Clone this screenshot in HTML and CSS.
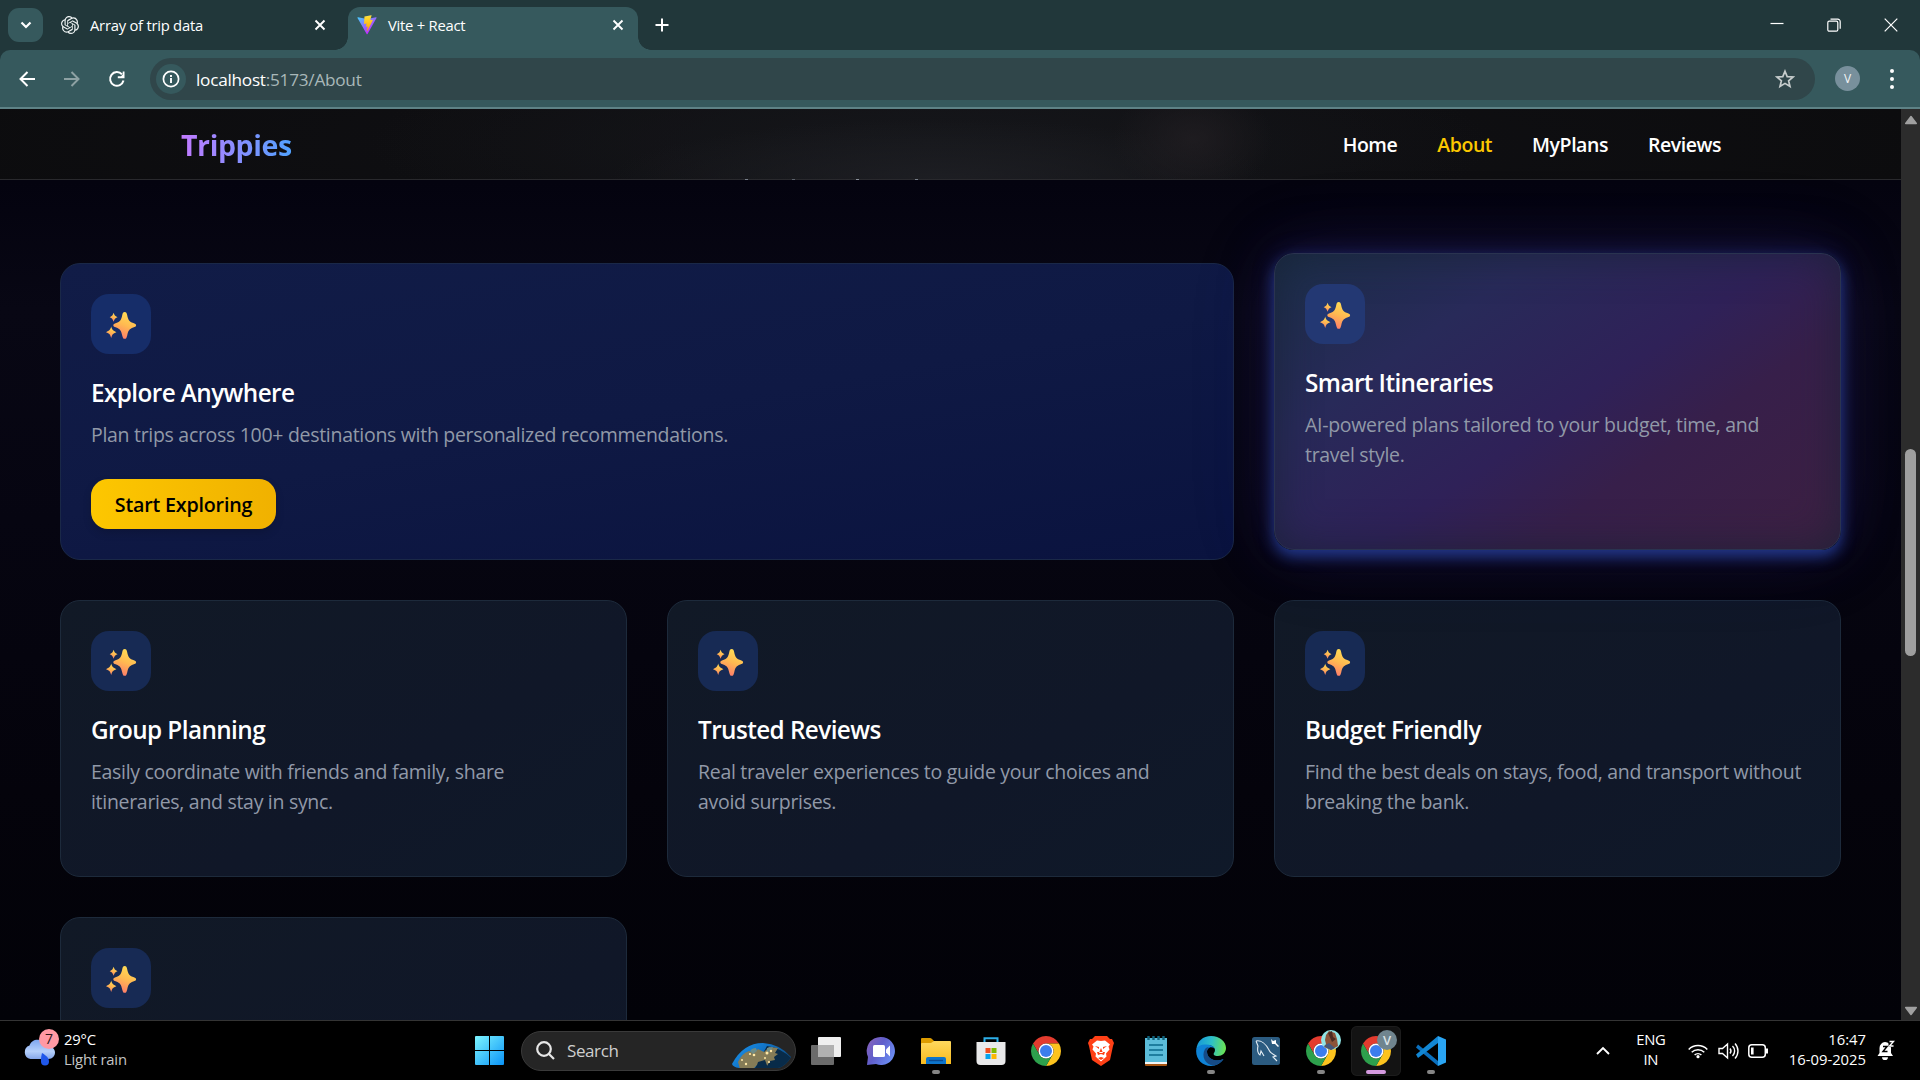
FILE: index.html
```html
<!DOCTYPE html>
<html lang="en">
<head>
<meta charset="utf-8">
<title>Vite + React</title>
<link rel="stylesheet" href="styles.css">
</head>
<body>
<svg class="defs" width="0" height="0" aria-hidden="true">
  <defs>
    <linearGradient id="gold" x1="0.7" y1="0" x2="0.35" y2="1"><stop offset="0" stop-color="#ffdf55"/><stop offset=".5" stop-color="#ffb951"/><stop offset="1" stop-color="#fd7a6c"/></linearGradient>
    <symbol id="sparkle" viewBox="0 0 60 60">
      <g fill="url(#gold)">
        <path d="M33.700 18c1.600 0 2 1.200 2.500 3.200 1 4.800 2.200 6.400 6 7.800 1.800.7 2.900 1.100 2.900 2.300s-1.100 1.700-2.900 2.300c-3.800 1.400-5 3-6 7.800-.5 2-.9 3.400-2.500 3.400s-2-1.400-2.500-3.400c-1-4.800-2.200-6.400-6-7.800-1.800-.6-2.900-1.100-2.900-2.300s1.100-1.600 2.900-2.300c3.800-1.400 5-3 6-7.800.5-2 .9-3.200 2.500-3.200z"/>
        <path d="M22.600 18.800c.8 2.600 1.300 3.200 3.900 4.400-2.600 1.200-3.100 1.900-3.900 4.600-.8-2.700-1.300-3.400-3.900-4.600 2.600-1.200 3.100-1.800 3.900-4.400z"/>
        <path d="M20.200 32.600c.9 3.300 1.700 4.200 5.200 5.600-3.500 1.300-4.300 2.300-5.200 5.900-.9-3.600-1.700-4.600-5.200-5.900 3.500-1.400 4.300-2.300 5.200-5.600z"/>
      </g>
    </symbol>
    <symbol id="chrome" viewBox="2 2 44 44">
      <path fill="#e33b2e" d="M4.950 13A22 22 0 0 1 43.050 13L24 13A11 11 0 0 0 14.470 29.500Z"/>
      <path fill="#fcc31e" d="M43.050 13A22 22 0 0 1 24 46L33.530 29.500A11 11 0 0 0 24 13Z"/>
      <path fill="#2da04c" d="M24 46A22 22 0 0 1 4.950 13L14.470 29.500A11 11 0 0 0 33.530 29.500Z"/>
      <circle cx="24" cy="24" r="11" fill="#fff"/><circle cx="24" cy="24" r="8.800" fill="#3b7ded"/>
    </symbol>
    <symbol id="x" viewBox="0 0 12 12"><path d="M1.500 1.500l9 9M10.500 1.500l-9 9" stroke="currentColor" stroke-width="1.900"/></symbol>
  </defs>
</svg>

<div class="screen">
  <div class="tabstrip">
    <button class="tab-search"><svg width="12" height="8" viewBox="0 0 12 8"><path d="M1.500 1.500L6 6l4.500-4.500" fill="none" stroke="#fff" stroke-width="2.200"/></svg></button>
    <div class="tab">
      <svg width="18" height="18" viewBox="0 0 24 24"><path fill="#eef3f3" d="M22.2819 9.8211a5.9847 5.9847 0 0 0-.5157-4.9108 6.0462 6.0462 0 0 0-6.5098-2.9A6.0651 6.0651 0 0 0 4.9807 4.1818a5.9847 5.9847 0 0 0-3.9977 2.9 6.0462 6.0462 0 0 0 .7427 7.0966 5.98 5.98 0 0 0 .511 4.9107 6.051 6.051 0 0 0 6.5146 2.9001A5.9847 5.9847 0 0 0 13.2599 24a6.0557 6.0557 0 0 0 5.7718-4.2058 5.9894 5.9894 0 0 0 3.9977-2.9001 6.0557 6.0557 0 0 0-.7475-7.0729zm-9.022 12.6081a4.4755 4.4755 0 0 1-2.8764-1.0408l.1419-.0804 4.7783-2.7582a.7948.7948 0 0 0 .3927-.6813v-6.7369l2.02 1.1686a.071.071 0 0 1 .038.052v5.5826a4.504 4.504 0 0 1-4.4945 4.4944zm-9.6607-4.1254a4.4708 4.4708 0 0 1-.5346-3.0137l.142.0852 4.783 2.7582a.7712.7712 0 0 0 .7806 0l5.8428-3.3685v2.3324a.0804.0804 0 0 1-.0332.0615L9.74 19.9502a4.4992 4.4992 0 0 1-6.1408-1.6464zM2.3408 7.8956a4.485 4.485 0 0 1 2.3655-1.9728V11.6a.7664.7664 0 0 0 .3879.6765l5.8144 3.3543-2.0201 1.1685a.0757.0757 0 0 1-.071 0l-4.8303-2.7865A4.504 4.504 0 0 1 2.3408 7.872zm16.5963 3.8558L13.1038 8.364 15.1192 7.2a.0757.0757 0 0 1 .071 0l4.8303 2.7913a4.4944 4.4944 0 0 1-.6765 8.1042v-5.6772a.79.79 0 0 0-.407-.667zm2.0107-3.0231l-.142-.0852-4.7735-2.7818a.7759.7759 0 0 0-.7854 0L9.409 9.2297V6.8974a.0662.0662 0 0 1 .0284-.0615l4.8303-2.7866a4.4992 4.4992 0 0 1 6.6802 4.66zM8.3065 12.863l-2.02-1.1638a.0804.0804 0 0 1-.038-.0567V6.0742a4.4992 4.4992 0 0 1 7.3757-3.4537l-.142.0805L8.704 5.459a.7948.7948 0 0 0-.3927.6813zm1.0976-2.3654l2.602-1.4998 2.6069 1.4998v2.9994l-2.5974 1.4997-2.6067-1.4997Z"/></svg>
      <span class="tab-title">Array of trip data</span>
      <svg class="close" width="12" height="12"><use href="#x"/></svg>
    </div>
    <div class="tab tab-active">
      <svg width="20" height="20" viewBox="0 0 410 404">
        <defs>
          <linearGradient id="va" x1="6" y1="33" x2="235" y2="344" gradientUnits="userSpaceOnUse"><stop stop-color="#41d1ff"/><stop offset="1" stop-color="#bd34fe"/></linearGradient>
          <linearGradient id="vb" x1="194" y1="8.800" x2="236" y2="293" gradientUnits="userSpaceOnUse"><stop stop-color="#ffea83"/><stop offset=".083" stop-color="#ffdd35"/><stop offset="1" stop-color="#ffa800"/></linearGradient>
        </defs>
        <path fill="url(#va)" d="M399.641 59.5246L215.643 388.545C211.844 395.338 202.084 395.378 198.228 388.618L10.5817 59.5563C6.38087 52.1896 12.6802 43.2665 21.0281 44.7586L205.223 77.6824C206.398 77.8924 207.601 77.8904 208.776 77.6763L389.119 44.8058C397.439 43.2894 403.768 52.1434 399.641 59.5246Z"/>
        <path fill="url(#vb)" d="M292.965 1.5744L156.801 28.2552C154.563 28.6937 152.906 30.5903 152.771 32.8664L144.395 174.33C144.198 177.662 147.258 180.248 150.51 179.498L188.42 170.749C191.967 169.931 195.172 173.055 194.443 176.622L183.18 231.775C182.422 235.487 185.907 238.661 189.532 237.56L212.947 230.446C216.577 229.344 220.065 232.527 219.297 236.242L201.398 322.875C200.278 328.294 207.486 331.249 210.492 326.603L212.5 323.5L323.454 102.072C325.312 98.3645 322.108 94.137 318.036 94.9228L279.014 102.454C275.347 103.161 272.227 99.746 273.262 96.1583L298.731 7.86689C299.767 4.27314 296.636 0.855181 292.965 1.5744Z"/>
      </svg>
      <span class="tab-title">Vite + React</span>
      <svg class="close" width="12" height="12"><use href="#x"/></svg>
    </div>
    <svg class="new-tab" width="14" height="14" viewBox="0 0 14 14"><path d="M7 .5v13M.5 7h13" stroke="#fff" stroke-width="2"/></svg>
    <div class="window-buttons">
      <svg width="14" height="14" viewBox="0 0 14 14"><path d="M.5 5.500h13" stroke="#fff" stroke-width="1.200"/></svg>
      <svg width="14" height="14" viewBox="0 0 14 14" fill="none" stroke="#fff" stroke-width="1.200"><rect x=".8" y="3.200" width="10" height="10" rx="1.500"/><path d="M3.500 1.200h7.200a2.500 2.500 0 0 1 2.500 2.500v7"/></svg>
      <svg width="14" height="14" viewBox="0 0 14 14"><path d="M.7.700l12.600 12.600M13.300.700L.7 13.300" stroke="#fff" stroke-width="1.200"/></svg>
    </div>
  </div>

  <div class="toolbar">
    <svg width="18" height="18" viewBox="0 0 18 18" fill="none" stroke="#fff" stroke-width="2"><path d="M17 9H3M9.500 2L2.500 9l7 7"/></svg>
    <svg width="18" height="18" viewBox="0 0 18 18" fill="none" stroke="#8da1a3" stroke-width="2"><path d="M1 9h14M8.500 2l7 7-7 7"/></svg>
    <svg width="18" height="18" viewBox="0 0 18 18" fill="none"><path d="M15.500 10.500A6.800 6.800 0 1 1 14 4.400" stroke="#fff" stroke-width="2"/><path d="M16.500 1.500v6.700H9.800V6.300h3.200l1.700-1.900V1.500z" fill="#fff"/></svg>
    <div class="omnibox">
      <span class="site-info"><svg width="18" height="18" viewBox="0 0 18 18" fill="none"><circle cx="9" cy="9" r="7.600" stroke="#fff" stroke-width="1.700"/><path d="M9 8v5M9 5v1.900" stroke="#fff" stroke-width="1.900"/></svg></span>
      <span class="url">localhost<i>:5173/About</i></span>
      <svg class="star" width="20" height="20" viewBox="0 0 20 20"><path d="M10 2.200l2.200 5.400 5.900.4-4.500 3.800 1.400 5.700-5-3.100-5 3.100 1.400-5.700L1.900 8l5.900-.4z" fill="none" stroke="#c6cccc" stroke-width="1.700"/></svg>
    </div>
    <span class="profile">V</span>
    <svg width="6" height="24" viewBox="0 0 6 24" fill="#fff"><circle cx="3" cy="4" r="2"/><circle cx="3" cy="12" r="2"/><circle cx="3" cy="20" r="2"/></svg>
  </div>

  <div class="viewport">
    <div class="page">
      <header class="site-header">
        <span class="logo">Trippies</span>
        <nav class="nav"><a>Home</a><a class="current">About</a><a>MyPlans</a><a>Reviews</a></nav>
      </header>
      <main class="cards">
        <article class="card card-wide">
          <span class="card-icon"><svg width="60" height="60"><use href="#sparkle"/></svg></span>
          <h3>Explore Anywhere</h3>
          <p>Plan trips across 100+ destinations with personalized recommendations.</p>
          <button class="cta">Start Exploring</button>
        </article>
        <article class="card card-hover">
          <span class="card-icon"><svg width="60" height="60"><use href="#sparkle"/></svg></span>
          <h3>Smart Itineraries</h3>
          <p>AI-powered plans tailored to your budget, time, and<br>travel style.</p>
        </article>
        <article class="card">
          <span class="card-icon"><svg width="60" height="60"><use href="#sparkle"/></svg></span>
          <h3>Group Planning</h3>
          <p>Easily coordinate with friends and family, share<br>itineraries, and stay in sync.</p>
        </article>
        <article class="card">
          <span class="card-icon"><svg width="60" height="60"><use href="#sparkle"/></svg></span>
          <h3>Trusted Reviews</h3>
          <p>Real traveler experiences to guide your choices and<br>avoid surprises.</p>
        </article>
        <article class="card">
          <span class="card-icon"><svg width="60" height="60"><use href="#sparkle"/></svg></span>
          <h3>Budget Friendly</h3>
          <p>Find the best deals on stays, food, and transport without<br>breaking the bank.</p>
        </article>
        <article class="card">
          <span class="card-icon"><svg width="60" height="60"><use href="#sparkle"/></svg></span>
        </article>
      </main>
    </div>
    <div class="scrollbar">
      <svg width="14" height="10" viewBox="0 0 14 10"><path d="M7 1.500L12.300 8.500H1.700z" fill="#a0a0a0" stroke="#a0a0a0" stroke-width="1.500" stroke-linejoin="round"/></svg>
      <div class="thumb"></div>
      <svg class="down" width="14" height="10" viewBox="0 0 14 10"><path d="M7 8.500L12.300 1.500H1.700z" fill="#a0a0a0" stroke="#a0a0a0" stroke-width="1.500" stroke-linejoin="round"/></svg>
    </div>
  </div>

  <div class="taskbar">
    <div class="weather">
      <svg width="36" height="38" viewBox="0 0 36 38">
        <defs><linearGradient id="cl" x2="0" y2="1"><stop stop-color="#7ea6ef"/><stop offset=".6" stop-color="#b5d0fb"/><stop offset="1" stop-color="#86a7ea"/></linearGradient></defs>
        <path d="M6.500 31a7 7 0 0 1-1-13.500C7 13 11.500 11 15.500 12c4 0 7 2 8.500 6 4 0 7 3 7 6.500S28.500 31 24.500 31z" fill="url(#cl)"/>
        <path d="M18 25c5 3 7 5.500 7 8.500a4 4 0 0 1-8 0c0-3 0-5 1-8.500z" fill="#1f57ea"/>
        <circle cx="25" cy="11" r="10" fill="#ff99a4"/><text class="badge-text" x="25" y="16" text-anchor="middle">7</text>
      </svg>
      <div class="two-line"><span>29°C</span><span class="muted">Light rain</span></div>
    </div>
    <svg width="29" height="29" viewBox="0 0 29 29"><defs><linearGradient id="w" x2="1" y2="1"><stop stop-color="#7df5ff"/><stop offset="1" stop-color="#0a93f7"/></linearGradient></defs><path fill="url(#w)" d="M1 0h13v14H0V1a1 1 0 0 1 1-1zM15 0h13a1 1 0 0 1 1 1v13H15zM0 15h14v14H1a1 1 0 0 1-1-1zM15 15h14v13a1 1 0 0 1-1 1H15z"/></svg>
    <div class="search">
      <svg width="19" height="19" viewBox="0 0 19 19" fill="none" stroke="#e6e6e6" stroke-width="2.200"><circle cx="8" cy="8" r="6.800"/><path d="M13 13l5 5"/></svg>
      <span>Search</span>
      <svg class="globe" width="60" height="26" viewBox="0 0 60 26">
        <defs>
          <linearGradient id="sea" x2="1" y2=".5"><stop stop-color="#1c9bf6"/><stop offset=".5" stop-color="#1275c8"/><stop offset="1" stop-color="#0d4d86"/></linearGradient>
          <clipPath id="dome"><path d="M1 22Q12 1 32 1q17 1 28 14-5 9-13 11H8q-6-1-7-4z"/></clipPath>
        </defs>
        <g clip-path="url(#dome)">
          <path d="M0 0h60v26H0z" fill="url(#sea)"/>
          <path d="M36 4q14 2 24 12v10H24z" fill="#082b49"/>
          <path d="M7 20q3-8 11-11l5 2 4-4 6 3 5-5 9 1-3 5 3 1-4 3 1 3-5 1-3 5-6 1-4-2-4 4H9z" fill="#857c57"/>
          <path d="M25 26l2-6 7-2 3 8z" fill="#082b49"/>
          <path d="M19 9q2-3 6-3l1 3-4 3zM36 6l6-1-2 4-4 1z" fill="#6f8d88"/>
        </g>
        <g fill="#ffe8a6"><circle cx="11" cy="18" r="1"/><circle cx="19" cy="12" r="1.100"/><circle cx="15" cy="22" r="1.200"/><circle cx="23" cy="13" r="1.300"/><circle cx="36" cy="11" r="1.500"/><circle cx="40" cy="9" r="1.200"/><circle cx="34" cy="16" r="1"/><circle cx="38" cy="20" r="1.100"/></g>
      </svg>
    </div>
    <div class="apps">
      <span class="app"><svg width="30" height="28" viewBox="0 0 30 28"><rect x="7" y="0" width="23" height="20" rx="1" fill="#efefef"/><rect x="0" y="8" width="23" height="20" rx="1" fill="#6b6b6b"/><rect x="7" y="8" width="16" height="12" fill="#b1b1b1"/></svg></span>
      <span class="app"><svg width="30" height="30" viewBox="0 0 30 30"><defs><linearGradient id="ch" x2="1" y2=".6"><stop stop-color="#8d63b8"/><stop offset=".5" stop-color="#605ecb"/><stop offset="1" stop-color="#6b8cf2"/></linearGradient></defs><path d="M15 1a14 14 0 1 1-5 27.100L1 29l1-8A14 14 0 0 1 15 1z" fill="url(#ch)"/><rect x="7" y="9" width="12" height="12" rx="1.500" fill="#fff"/><path d="M20 13.500l4-4v11l-4-4z" fill="#fff"/></svg></span>
      <span class="app running"><svg width="30" height="28" viewBox="0 0 30 28"><defs><linearGradient id="fo" x2="0" y2="1"><stop stop-color="#ffd95e"/><stop offset="1" stop-color="#f8bb1e"/></linearGradient></defs><path d="M0 2q0-1 1-1h8q1 0 2 1l2 2h15v12H0z" fill="#dd9c00"/><path d="M0 7q0-1 1-1h9l3-2h16q1 0 1 1v22H0z" fill="url(#fo)"/><path d="M5 27v-5q0-2 2-2h16q2 0 2 2v5z" fill="#0d75cc"/><path d="M8 23.500h14" stroke="#0b4a91" stroke-width="1.400"/></svg></span>
      <span class="app"><svg width="30" height="30" viewBox="0 0 30 30"><path d="M8.500 7V2.200h13V7" fill="none" stroke="#2dafe8" stroke-width="2"/><path d="M.5 6h29v19a4 4 0 0 1-4 4h-21a4 4 0 0 1-4-4z" fill="#e9e9ea"/><path fill="#f04e1f" d="M9.500 12h5v5h-5z"/><path fill="#80bb00" d="M15.500 12h5v5h-5z"/><path fill="#04a3ee" d="M9.500 18h5v5h-5z"/><path fill="#fdb704" d="M15.500 18h5v5h-5z"/></svg></span>
      <span class="app"><svg width="30" height="30"><use href="#chrome"/></svg></span>
      <span class="app"><svg width="26" height="30" viewBox="0 0 26 30"><path d="M7 0h12l3 3 2 0 2 4-1 3-3 14-9 6-9-6L1 10 0 7l2-4 2 0z" fill="#ff4016"/><path d="M13 5l4-.5 5 4-1.500 2 1 3-3.500 4 .5 3-5.500 5-5.500-5L8 17.500 4.500 13.500l1-3L4 8.500l5-4z" fill="#fff"/><path d="M7 10l4 1v2zM19 10l-4 1v2zM13 12l2 5h-4zM9 16l1 3 3-1 3 1 1-3M10 22l3-1 3 1-3 2z" fill="#ff4016"/></svg></span>
      <span class="app"><svg width="22" height="30" viewBox="0 0 22 30"><rect y="26" width="22" height="4" rx="1" fill="#a75512"/><rect y="25" width="22" height="3" fill="#f2f5f5"/><path d="M0 2h22v24H0z" fill="#5bbcd9"/><path d="M4 9h14M4 14h14M4 19h14" stroke="#0b6a8c" stroke-width="1.700"/><path d="M3.500 0v4M8.500 0v4M13.500 0v4M18.500 0v4" stroke="#11657e" stroke-width="2.400"/></svg></span>
      <span class="app running"><svg width="30" height="30" viewBox="0 0 30 30"><defs><linearGradient id="e1" x1="0" y1=".4" x2="1" y2=".5"><stop stop-color="#1697da"/><stop offset=".5" stop-color="#2dbfc8"/><stop offset="1" stop-color="#6be350"/></linearGradient></defs><path d="M.3 14C1 5 7 0 15 0c9 0 15 6 15 12 0 5-4 8-8 8-4 0-5-1.500-4-3 3-4-1-8-6-8C6 9 1 11 .3 14z" fill="url(#e1)"/><path d="M.2 14C1 10 5 8.500 10 8.500c4 0 7 1 8.500 4C14 9.500 11 13 11 16c0 6 6 9 11 8.500 2 0 4-1 5.500-1.500C25 27 20 30 15 30 6 30-.5 23 .2 14z" fill="#0f83d6"/><path d="M9 13c-4 7 0 16 9 16.500 4-.7 7-3 9.500-6.500-8 3.500-16 0-16.500-7 0-2 .5-4 2-5-1.500 0-3 .7-4 2z" fill="#164b86"/></svg></span>
      <span class="app"><svg width="28" height="28" viewBox="0 0 28 28"><rect width="28" height="28" rx="2.500" fill="#2b5b80"/><path d="M4 4c5-1 10 3 13 9 1 3 4 4 7 6l-3 1 4 4M4 4l2 5c-1 4 0 8 2 9l1-4 3 5" fill="none" stroke="#e4edf3" stroke-width="1.100"/><path d="M19 2l2 2 3-1 0 3 3 3-1 1-3-3-3 0z" fill="#fff"/></svg></span>
      <span class="app running"><svg width="30" height="30"><use href="#chrome"/></svg><svg class="overlay" width="20" height="20" viewBox="0 0 20 20"><circle cx="10" cy="10" r="10" fill="#91e5e5"/><path d="M5 5l3-4 6 2 2 6 1 7-7 4-7-3 2-3-1-4z" fill="#8c5439"/><path d="M7 3l4-2 1 6 3 2-4 3z" fill="#4a2b22"/><path d="M3 16l5-3 6 5-4 2z" fill="#46597a"/></svg></span>
      <span class="app running active"><svg width="30" height="30"><use href="#chrome"/></svg><span class="overlay letter">V</span></span>
      <span class="app running"><svg width="30" height="30" viewBox="0 0 30 30"><path d="M2 8.500L22 25v5L0 11.500z" fill="#0a6fbd"/><path d="M0 18.500L22 0v7L2 22z" fill="#1287d4"/><path d="M22 0l8 3.500v23L22 30z" fill="#2aa5f3"/></svg></span>
    </div>
    <div class="tray">
      <svg width="14" height="9" viewBox="0 0 14 9"><path d="M1 8l6-6 6 6" fill="none" stroke="#fff" stroke-width="1.900"/></svg>
      <div class="two-line lang"><span>ENG</span><span>IN</span></div>
      <svg width="20" height="16" viewBox="0 0 20 16" fill="none" stroke="#fff" stroke-width="1.500"><path d="M.7 6.500a13 13 0 0 1 18.600 0M3.700 9.300a9 9 0 0 1 12.600 0M6.600 12a5 5 0 0 1 6.800 0"/><circle cx="10" cy="13.700" r="1.600" fill="#fff" stroke="none"/></svg>
      <svg class="vol" width="21" height="18" viewBox="0 0 21 18" fill="none" stroke="#fff" stroke-width="1.400"><path d="M1 6.500h3.500L9.500 2v14L4.500 11.500H1zM12 6.500a4 4 0 0 1 0 5M14.500 4a7 7 0 0 1 0 10M17 1.500a11 11 0 0 1 0 15"/></svg>
      <svg class="bat" width="21" height="14" viewBox="0 0 21 14" fill="none"><rect x=".8" y=".8" width="16.500" height="12.400" rx="3" stroke="#fff" stroke-width="1.500"/><path d="M4.300 3.500v7" stroke="#fff" stroke-width="2.600"/><path d="M19 4.500v5" stroke="#fff" stroke-width="2"/></svg>
      <div class="two-line clock"><span>16:47</span><span>16-09-2025</span></div>
      <svg class="bell" width="18" height="20" viewBox="0 0 18 20"><path d="M8 2a6 6 0 0 1 6 6v5l2 3H.5l2-3V8A6 6 0 0 1 8 2zM5 17.200h6a3 3 0 0 1-6 0z" fill="#fff"/><path d="M6 6.500h4l-4 5h4.500" fill="none" stroke="#000" stroke-width="1.500"/><path d="M11.500 0H18v7h-6.500z" fill="#000"/><path d="M12.500 1.500h4l-4 4.500h4" fill="none" stroke="#fff" stroke-width="1.400"/></svg>
    </div>
  </div>
</div>
</body>
</html>
```
FILE: styles.css
```css
* { box-sizing: border-box; }
body { margin: 0; background: #000; font-family: "Open Sans", "Noto Sans", sans-serif; color: #fff; }
svg { display: block; flex: none; }
.defs { position: absolute; }
button { font: inherit; border: 0; padding: 0; }
.screen { width: 1920px; height: 1080px; overflow: hidden; display: flex; flex-direction: column; background: #21373a; }

/* Browser chrome */
.tabstrip { height: 50px; flex: none; display: flex; align-items: flex-start; padding-left: 8px; background: #21373a; }
.tab-search { width: 35px; height: 34px; margin-top: 8px; border-radius: 11px; background: #36595d; display: grid; place-items: center; }
.tab { width: 290px; height: 36px; margin-top: 7px; margin-left: 9px; padding: 0 14px 0 9px; display: flex; align-items: center; font-size: 14.8px; letter-spacing: -0.25px; }
.tab-search + .tab { width: 287px; padding-right: 13px; }
.tab-title { margin-left: 11px; line-height: 20px; white-space: nowrap; }
.close { margin-left: auto; }
.tab-active { position: relative; height: 43px; padding-bottom: 7px; background: #36595d; border-radius: 12px 12px 0 0; }
.tab-active::before, .tab-active::after { content: ""; position: absolute; bottom: 0; width: 13px; height: 13px; }
.tab-active::before { left: -13px; background: radial-gradient(circle at 0 0, transparent 12.5px, #36595d 13px); }
.tab-active::after { right: -13px; background: radial-gradient(circle at 100% 0, transparent 12.5px, #36595d 13px); }
.new-tab { margin: 18px 0 0 17px; }
.window-buttons { margin: 18px 22px 0 auto; display: flex; gap: 43px; }
.toolbar { height: 59px; flex: none; display: flex; align-items: center; padding: 0 25px 0 18px; background: #36595d; border-bottom: 2px solid #5e8286; border-radius: 10px 10px 0 0; }
.toolbar > svg + svg { margin-left: 27px; }
.toolbar > svg { margin-right: 0; }
.omnibox { flex: 1; height: 42px; margin-left: 24px; padding: 0 20px 0 6px; border-radius: 21px; background: #30464a; display: flex; align-items: center; }
.site-info { width: 30px; height: 30px; border-radius: 50%; background: #36595d; display: grid; place-items: center; }
.url { margin-left: 10px; padding-top: 1px; font-size: 17.2px; letter-spacing: -0.25px; white-space: nowrap; }
.url i { font-style: normal; color: #a9b8b9; }
.star { margin-left: auto; }
.profile { width: 25px; height: 25px; margin: 0 29px 0 20px; border-radius: 50%; background: #78909c; display: grid; place-items: center; font-size: 12px; color: #f2f5f6; }

/* Page */
.viewport { height: 911px; flex: none; display: flex; }
.page { flex: 1; min-width: 0; overflow: hidden; background: linear-gradient(#04030f 0, #04030f 8%, #080714 22%, #060511 45%, #04030b 75%, #020208 100%); }
.site-header { position: relative; height: 71px; padding: 2px 180px 0 181px; display: flex; align-items: center; justify-content: space-between; border-bottom: 1px solid #29292d;
  background: radial-gradient(ellipse 80px 55px at 1193px 30px, rgba(33, 30, 34, .8), transparent), radial-gradient(ellipse 330px 60px at 940px 70px, rgba(30, 31, 36, .9), transparent), radial-gradient(ellipse 560px 110px at 930px 35px, #15161a, transparent), radial-gradient(ellipse 1000px 140px at 930px 35px, #111115, #0c0c0e); }
.site-header::after { content: ""; position: absolute; left: 745px; top: 70px; width: 3px; height: 1px; background: #777e89; box-shadow: 47px 0 #5d636d, 111px 0 #8b919b, 170px 0 #777e89; }
.logo { font-size: 28.5px; font-weight: 700; letter-spacing: -0.4px; line-height: 40px; background: linear-gradient(90deg, #c27aff, #51a2ff); background-clip: text; -webkit-background-clip: text; color: transparent; }
.nav { display: flex; gap: 40px; font-size: 19.5px; font-weight: 650; letter-spacing: -0.45px; line-height: 30px; }
.current { color: #fcc800; }
.cards { padding: 83px 60px 0; display: grid; grid-template-columns: repeat(3, 567px); grid-template-rows: 297px 277px 277px; gap: 40px; }
.card { padding: 30px; border: 1px solid #1d2a3b; border-radius: 20px; background: linear-gradient(150deg, #111926, #101728 60%, #0f1929); display: flex; flex-direction: column; align-items: flex-start; }
.card-wide { grid-column: span 2; background: linear-gradient(170deg, #111c47, #0f1944 50%, #0a133f); border-color: #1a2847; }
.card-hover { transform: translateY(-10px); border-color: #2a3350; background: linear-gradient(145deg, #1b2e48, #282a59 27%, #2f2158 52%, #371f4a 68%, #3d2042);
  box-shadow: inset 0 0 42px rgba(24, 33, 52, .75), 0 7px 14px rgba(42, 75, 180, .62), 0 0 22px rgba(45, 60, 170, .3), 0 0 60px rgba(70, 45, 140, .22), 0 0 90px rgba(50, 50, 140, .14); }
.card-icon { width: 60px; height: 60px; border-radius: 18px; background: #172a54; }
.card-wide .card-icon { background: #162d69; }
.card-hover .card-icon { background: #233873; }
.card h3 { margin: 21px 0 10px; font-size: 24.3px; font-weight: 630; line-height: 35px; letter-spacing: -0.58px; white-space: nowrap; }
.card p { margin: 0; font-size: 19.5px; line-height: 30px; letter-spacing: -0.3px; color: #9199a8; white-space: nowrap; }
.cta { width: 185px; height: 50px; margin-top: 29px; border-radius: 17px; background: linear-gradient(90deg, #fdc700, #f0b100); color: #000; font-size: 19.7px; font-weight: 550; letter-spacing: -0.2px; box-shadow: 0 4px 8px rgba(0, 0, 0, .15); }
.scrollbar { width: 19px; background: #2c2c2c; display: flex; flex-direction: column; align-items: center; padding: 6px 0 4px; }
.thumb { width: 11px; height: 207px; margin-top: 324px; border-radius: 6px; background: #9f9f9f; }
.down { margin-top: auto; }

/* Taskbar */
.taskbar { height: 60px; flex: none; border-top: 1px solid #343434; background: #000; display: flex; align-items: center; }
.weather { width: 475px; padding-left: 24px; display: flex; align-items: center; }
.weather svg { margin-top: -7px; }
.badge-text { font-size: 14px; fill: #30181c; }
.two-line { display: flex; flex-direction: column; font-size: 14.8px; line-height: 20px; letter-spacing: -0.2px; padding-bottom: 3px; }
.weather .two-line { margin-left: 4px; }
.muted { color: #c4c4c4; }
.search { width: 275px; height: 40px; margin-left: 17px; padding: 0 4px 0 14px; border: 1px solid #3a3a3a; border-radius: 20px; background: #252525; display: flex; align-items: center; font-size: 17px; letter-spacing: -0.4px; color: #cfcfcf; }
.search span { margin-left: 12px; }
.globe { margin: 9px 0 0 auto; }
.apps { display: flex; margin-left: 2px; }
.app { position: relative; width: 55px; height: 50px; display: grid; place-items: center; }
.running::after { content: ""; position: absolute; left: 24px; bottom: 2px; width: 8px; height: 4px; border-radius: 2px; background: #858585; }
.active { width: 50px; margin: 0 2px 0 3px; border-radius: 6px; background: #131313; box-shadow: inset 0 0 0 1px #1c1c1c; }
.active::after { left: 15px; width: 20px; background: #d59ae0; }
.overlay { position: absolute; left: 28px; top: 4px; }
.letter { left: 26px; width: 20px; height: 20px; border-radius: 50%; background: #70858f; color: #dce3e6; font-size: 13px; font-weight: 600; display: grid; place-items: center; }
.tray { flex: 1; display: flex; align-items: center; justify-content: flex-end; padding-right: 25px; }
.lang { width: 40px; align-items: center; margin: 0 17px 0 21px; letter-spacing: -0.4px; }
.vol { margin-left: 10px; }
.bat { margin-left: 9px; }
.bell { margin-top: -2px; }
.clock { align-items: flex-end; margin: 0 11px 0 20px; letter-spacing: 0; }
```
